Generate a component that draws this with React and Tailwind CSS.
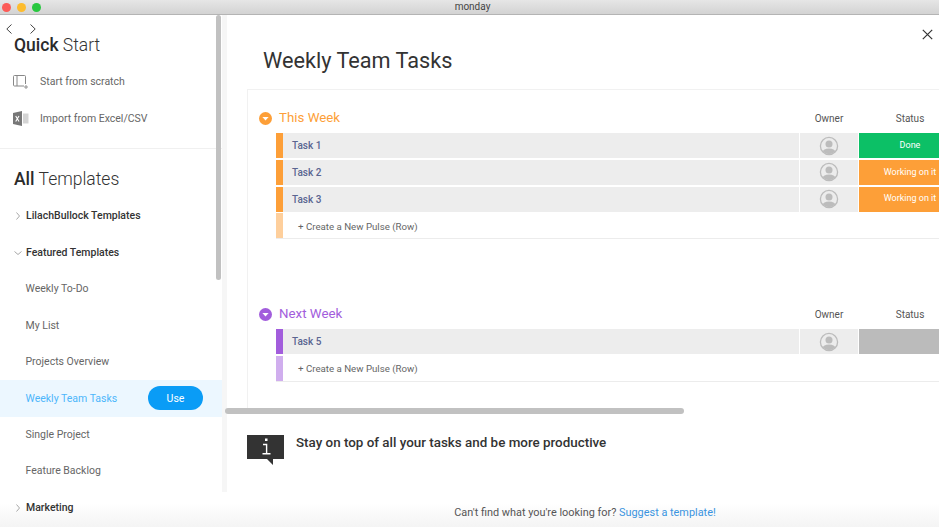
import React from "react";

const font = { fontFamily: "Roboto, 'Noto Sans', sans-serif" };

function Chevron({ open }) {
  return (
    <svg width="8" height="10" viewBox="0 0 8 10" fill="none" stroke="#a8a8a8" strokeWidth="1" className="shrink-0">
      {open ? <path d="M0.5 3.5 L4 6.5 L7.5 3.5" /> : <path d="M2.5 1.5 L5.5 5 L2.5 8.5" />}
    </svg>
  );
}

function Avatar() {
  return (
    <svg width="20" height="20" viewBox="0 0 20 20">
      <defs>
        <clipPath id="av"><circle cx="10" cy="10" r="8.2" /></clipPath>
      </defs>
      <circle cx="10" cy="10" r="8.6" fill="#ececec" stroke="#bcbcbc" strokeWidth="1.3" />
      <g clipPath="url(#av)" fill="#bcbcbc">
        <circle cx="10" cy="8" r="3.5" />
        <ellipse cx="10" cy="17" rx="7" ry="4.6" />
      </g>
    </svg>
  );
}

function GroupDot({ color }) {
  return (
    <svg width="13" height="13" viewBox="0 0 13 13" className="shrink-0">
      <circle cx="6.5" cy="6.5" r="6.5" fill={color} />
      <path d="M3.4 5 H9.6 L6.5 8.6 Z" fill="#fff" />
    </svg>
  );
}

function ColHead({ title, color, dot }) {
  return (
    <div className="flex items-center h-[24px] w-[740px]">
      <div className="ml-[11px]"><GroupDot color={dot} /></div>
      <div className={`ml-[7px] text-[13.3px] font-normal leading-[23px] h-[24px] w-[521px] ${color}`}>{title}</div>
      <div className="w-[58px] text-center text-[10px] text-[#555]">Owner</div>
      <div className="w-[102px] ml-[1px] text-center text-[10px] text-[#555]">Status</div>
    </div>
  );
}

function TaskRow({ name, bar, status, statusBg }) {
  return (
    <div className="flex h-[25px] mb-[1.8px] ml-[28px] w-[712px]">
      <div className={`w-[7px] ${bar}`} />
      <div className="w-[516px] bg-[#ededed] flex items-center pl-[9px] text-[10px] font-medium text-[#5a6591]">{name}</div>
      <div className="w-[58px] ml-[1px] bg-[#ededed] flex items-center justify-center"><Avatar /></div>
      <div className={`w-[102px] ml-[1px] flex items-center justify-center text-[9px] text-white ${statusBg}`}>{status}</div>
    </div>
  );
}

function CreateRow({ bar }) {
  return (
    <div className="flex h-[25px] ml-[28px] w-[692px] border-b border-[#ececec] box-content">
      <div className={`w-[7px] ${bar}`} />
      <div className="pl-[15px] pt-[2px] flex items-center text-[9.7px] text-[#666]">+ Create a New Pulse (Row)</div>
    </div>
  );
}

function SideItem({ children }) {
  return <div className="h-[36.45px] flex items-center pl-[25.5px] text-[10.5px] text-[#666]">{children}</div>;
}

function SideGroup({ open, children }) {
  return (
    <div className="h-[36.45px] flex items-center pl-[14px] gap-[4px] text-[10.5px] font-medium text-[#333]">
      <Chevron open={open} />
      <span>{children}</span>
    </div>
  );
}

export default function App() {
  return (
    <div className="w-[939px] h-[527px] overflow-hidden bg-white relative flex flex-col" style={font}>
      <div className="absolute left-0 right-0 bottom-0 h-[24px] bg-gradient-to-b from-transparent to-[#f4f4f4]" />

      <div className="h-[15px] shrink-0 bg-gradient-to-b from-[#e6e6e6] to-[#d3d3d3] border-b border-[#b4b4b4] flex items-center relative">
        <div className="flex gap-[6px] ml-[2px]">
          <span className="w-[9px] h-[9px] rounded-full bg-[#fc5b57]" />
          <span className="w-[9px] h-[9px] rounded-full bg-[#fdbc2e]" />
          <span className="w-[9px] h-[9px] rounded-full bg-[#28c73f]" />
        </div>
        <div className="absolute left-0 right-0 text-center text-[10px] leading-[14px] text-[#444] translate-x-[3px]">monday</div>
      </div>

      <div className="flex flex-1 min-h-0 relative">
        <aside className="w-[222px] shrink-0 relative">
          <div className="absolute left-[6px] top-[9px] flex gap-[18px]">
            <svg width="6" height="10" viewBox="0 0 6 10" fill="none" stroke="#444" strokeWidth="1"><path d="M5.5 0.5 L0.8 5 L5.5 9.5" /></svg>
            <svg width="6" height="10" viewBox="0 0 6 10" fill="none" stroke="#444" strokeWidth="1"><path d="M0.5 0.5 L5.2 5 L0.5 9.5" /></svg>
          </div>
          <div className="absolute left-[216px] top-0 w-[5px] h-[265px] rounded-full bg-[#c1c1c1]" />

          <div className="pl-[14px] pt-[18px] h-[49px] text-[17.5px] leading-[24px] font-light text-[#333]"><b className="font-medium text-[#2b2b2b]">Quick</b> Start</div>
          <div className="h-[36.5px] flex items-center pl-[13px] text-[10.5px] text-[#666]">
            <svg width="16" height="14" viewBox="0 0 16 14" fill="none" stroke="#888" strokeWidth="1">
              <path d="M11 11 H1.5 Q0.5 11 0.5 10 V1.5 Q0.5 0.5 1.5 0.5 H11.5 Q12.5 0.5 12.5 1.5 V9" />
              <path d="M4 0.5 V11" />
              <path d="M11 12 H15 M13 10 V14" strokeWidth="0.9" />
            </svg>
            <span className="ml-[11px]">Start from scratch</span>
          </div>
          <div className="h-[36.5px] flex items-center pl-[13px] text-[10.5px] text-[#666]">
            <svg width="16" height="15" viewBox="0 0 16 15">
              <path d="M0 2 L9 0 V15 L0 13 Z" fill="#777" />
              <path d="M10 2.5 H15.5 V12.5 H10 Z" fill="#d4d4d4" />
              <path d="M2.7 5 L6 10.5 M6 5 L2.7 10.5" stroke="#fff" strokeWidth="1.1" />
            </svg>
            <span className="ml-[11px]">Import from Excel/CSV</span>
          </div>
          <div className="h-[10.5px] border-b border-[#f0f0f0] box-content" />

          <div className="pl-[14px] pt-[18px] pb-[6px] h-[49.5px] flex items-center text-[17.5px] font-light text-[#333]"><b className="font-medium text-[#2b2b2b] mr-[4px]">All</b> Templates</div>
          <SideGroup>LilachBullock Templates</SideGroup>
          <SideGroup open>Featured Templates</SideGroup>
          <SideItem>Weekly To-Do</SideItem>
          <SideItem>My List</SideItem>
          <SideItem>Projects Overview</SideItem>
          <div className="h-[36.45px] flex items-center justify-between pl-[25.5px] pr-[19px] bg-[#ecf7ff] text-[10.5px] text-[#4db6fb]">
            <span>Weekly Team Tasks</span>
            <span className="w-[55px] h-[24px] rounded-full bg-[#0a9cf6] text-white text-[10.5px] flex items-center justify-center">Use</span>
          </div>
          <SideItem>Single Project</SideItem>
          <SideItem>Feature Backlog</SideItem>
          <SideGroup>Marketing</SideGroup>
        </aside>

        <main className="flex-1 min-w-0 relative pl-[5px] overflow-hidden">
          <div className="absolute left-0 top-0 w-[5px] h-[477px] bg-[#f6f6f6]" />
          <button className="absolute right-[6px] top-[14px]" aria-label="Close">
            <svg width="11" height="11" viewBox="0 0 11 11" stroke="#333" strokeWidth="1.2" fill="none"><path d="M0.8 0.8 L10.2 10.2 M10.2 0.8 L0.8 10.2" /></svg>
          </button>

          <h1 className="ml-[36px] pt-[32px] h-[74px] text-[21.7px] leading-[28px] font-normal text-[#333]">Weekly Team Tasks</h1>

          <section className="ml-[20px] border-t border-l border-[#f1f1f1] h-[320px] pt-[16px]">
            <ColHead title="This Week" color="text-[#fd9f38]" dot="#fd9f38" />
            <div className="h-[3px]" />
            <TaskRow name="Task 1" bar="bg-[#fd9f38]" status="Done" statusBg="bg-[#0cc066]" />
            <TaskRow name="Task 2" bar="bg-[#fd9f38]" status="Working on it" statusBg="bg-[#fd9f38]" />
            <TaskRow name="Task 3" bar="bg-[#fd9f38]" status="Working on it" statusBg="bg-[#fd9f38]" />
            <CreateRow bar="bg-[#fecf9c]" />
            <div className="h-[63px]" />
            <ColHead title="Next Week" color="text-[#a25ddc]" dot="#a25ddc" />
            <div className="h-[3px]" />
            <TaskRow name="Task 5" bar="bg-[#a25ddc]" status="" statusBg="bg-[#bbbbbb]" />
            <CreateRow bar="bg-[#d0aeee]" />
          </section>

          <div className="absolute left-[3px] top-[393px] w-[459px] h-[6px] rounded-full bg-[#c1c1c1]" />

          <div className="flex ml-[20px] mt-[26px] h-[68px]">
            <svg width="37" height="31" viewBox="0 0 37 31" className="shrink-0">
              <path d="M0 0 H37 V24 H26 V30 L20 24 H0 Z" fill="#333" />
              <path d="M18 3.5 H20.5 V6 H18 Z" fill="#fff" />
              <path d="M16 9.5 H19.6 V18.5 M15.5 18.7 H23.5" fill="none" stroke="#fff" strokeWidth="1.4" />
            </svg>
            <div className="ml-[12px] text-[13.4px] leading-[16px] font-medium text-[#333]">Stay on top of all your tasks and be more productive</div>
          </div>

          <div className="text-center text-[10.9px] leading-[16px] text-[#555] ml-[4px] mt-[2px]">Can't find what you're looking for? <span className="text-[#3a94e0]">Suggest a template!</span></div>
        </main>
      </div>
    </div>
  );
}
